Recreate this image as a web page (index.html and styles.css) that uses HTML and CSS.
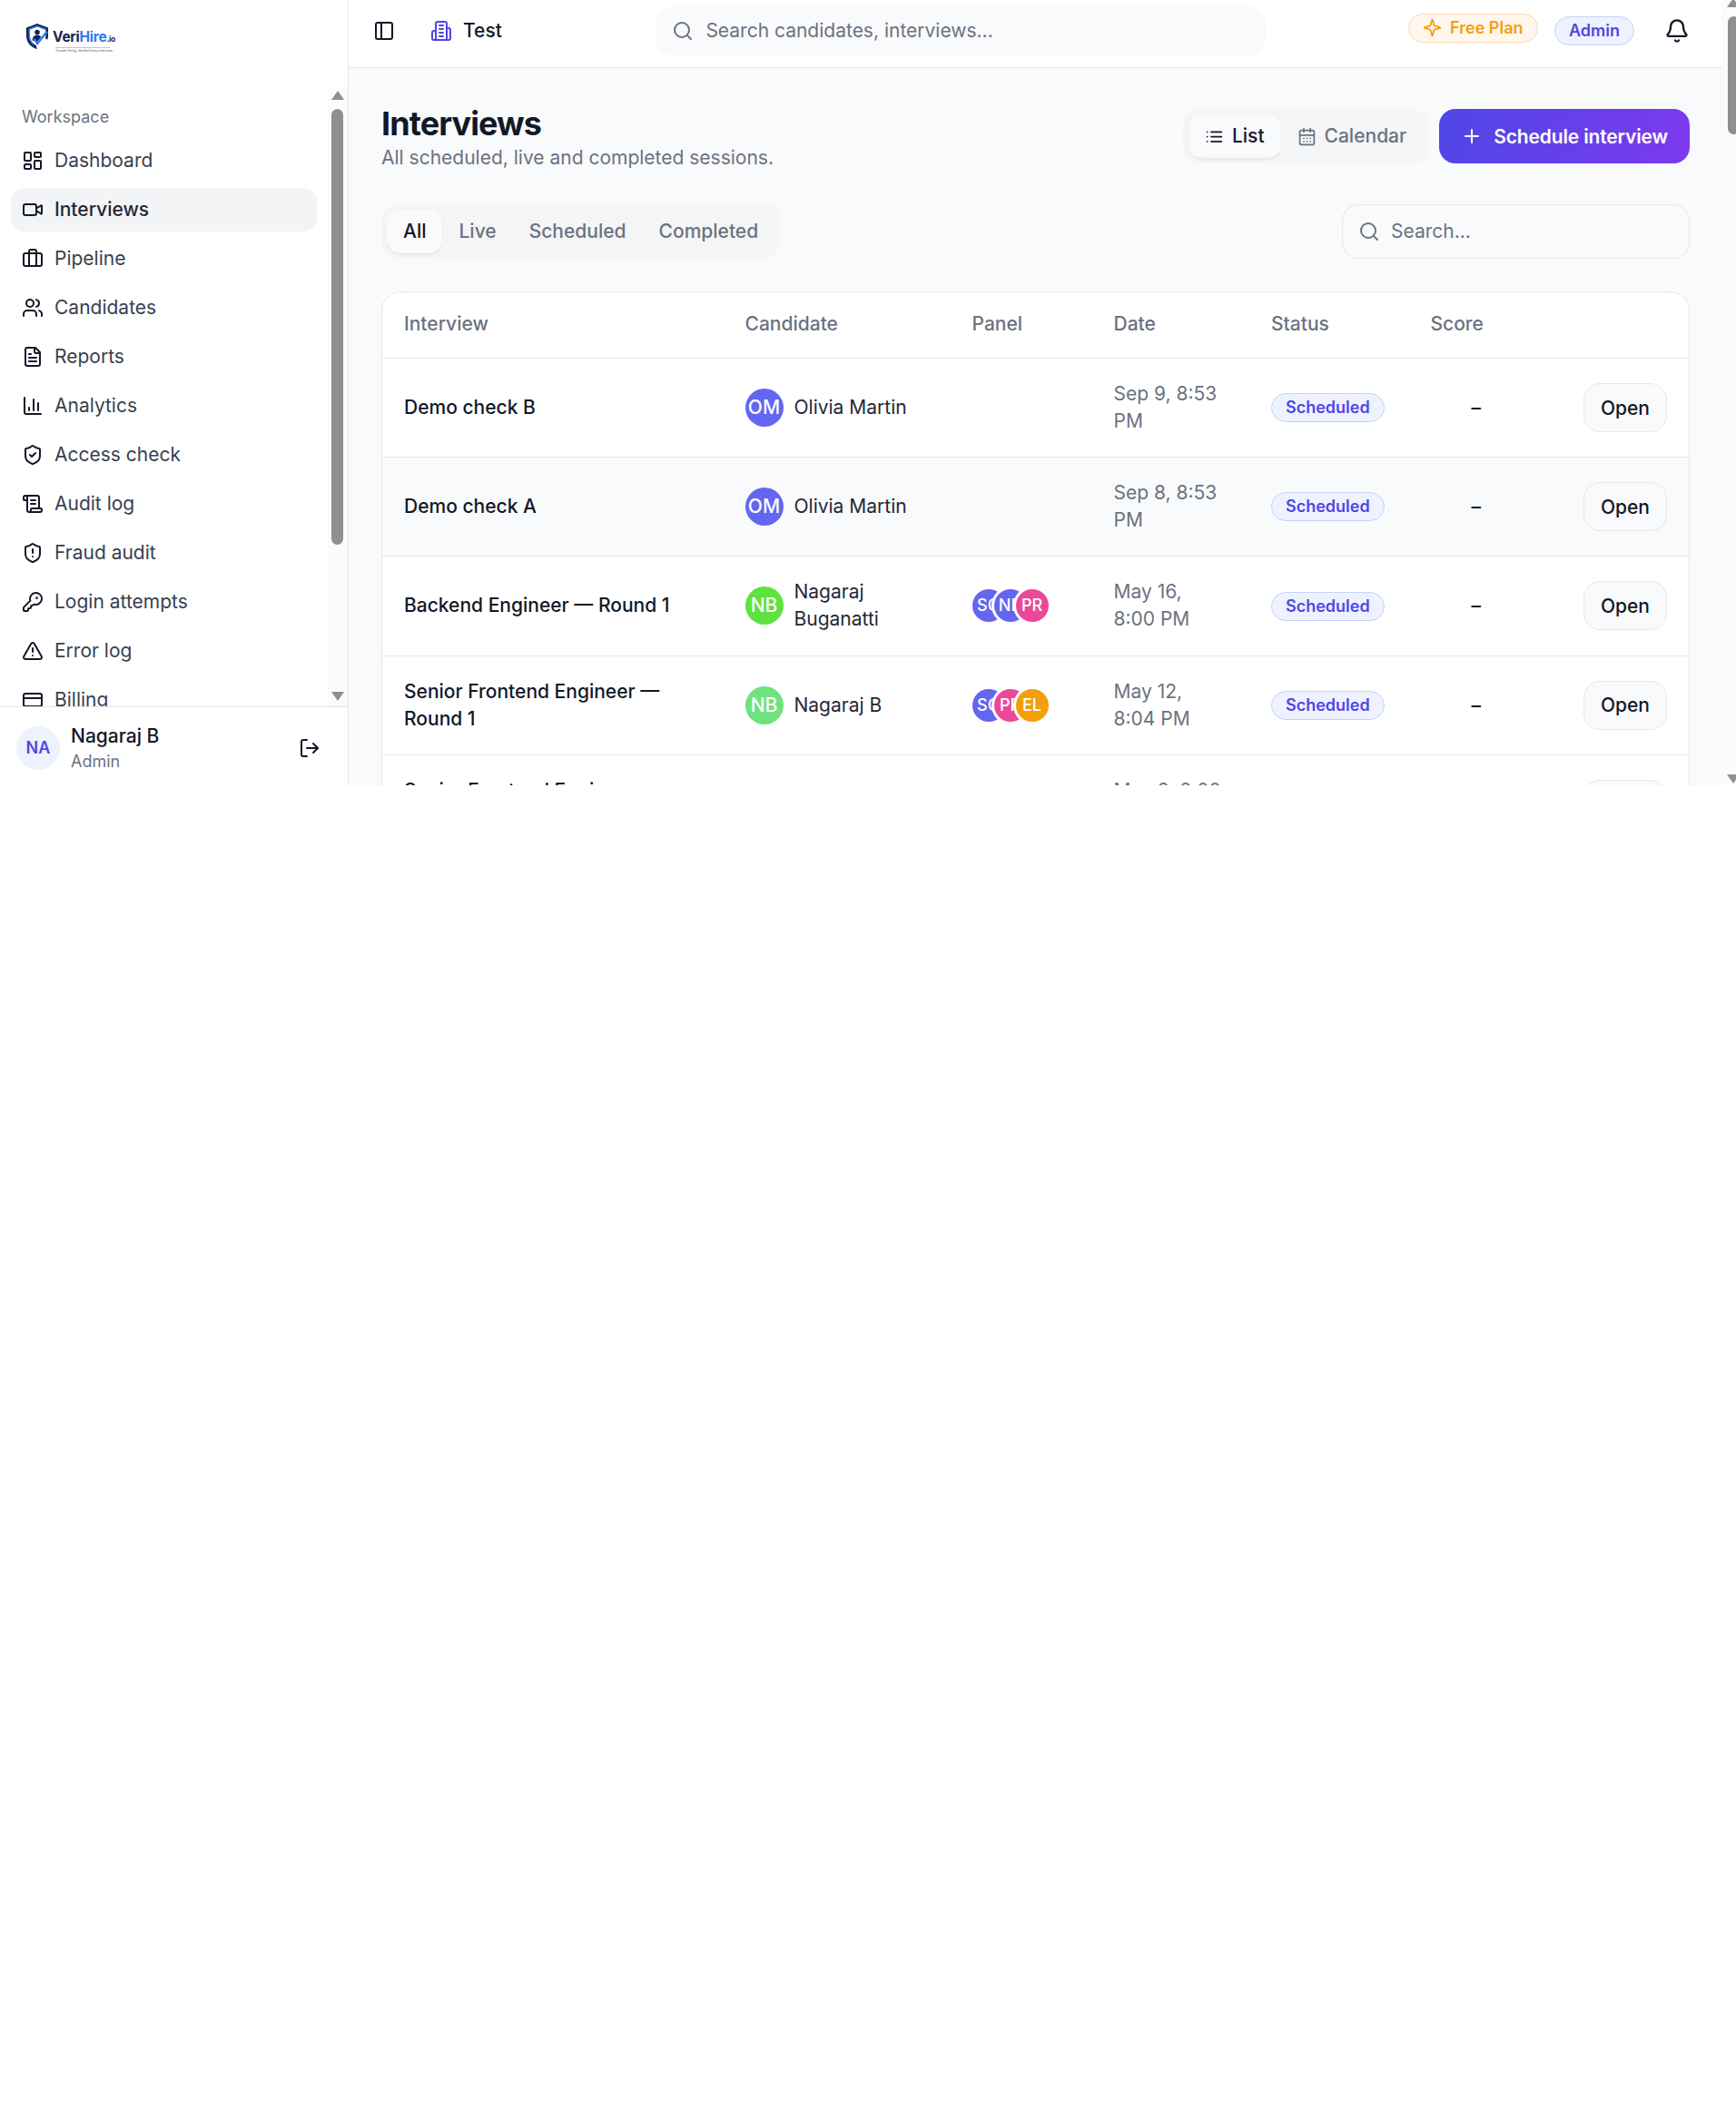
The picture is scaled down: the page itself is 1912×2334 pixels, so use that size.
FILE: index.html
```html
<!DOCTYPE html>
<html lang="en">
<head>
<meta charset="utf-8">
<title>Interviews</title>
<link rel="stylesheet" href="styles.css">
</head>
<body>
<svg class="sprite" aria-hidden="true">
  <symbol id="i-dash" viewBox="0 0 24 24"><rect x="3" y="3" width="7" height="9" rx="1"/><rect x="14" y="3" width="7" height="5" rx="1"/><rect x="14" y="12" width="7" height="9" rx="1"/><rect x="3" y="16" width="7" height="5" rx="1"/></symbol>
  <symbol id="i-video" viewBox="0 0 24 24"><path d="m16 13 5.223 3.482a.5.5 0 0 0 .777-.416V7.87a.5.5 0 0 0-.752-.432L16 10.5"/><rect x="2" y="6" width="14" height="12" rx="2"/></symbol>
  <symbol id="i-brief" viewBox="0 0 24 24"><path d="M16 20V4a2 2 0 0 0-2-2h-4a2 2 0 0 0-2 2v16"/><rect x="2" y="6" width="20" height="14" rx="2"/></symbol>
  <symbol id="i-users" viewBox="0 0 24 24"><path d="M16 21v-2a4 4 0 0 0-4-4H6a4 4 0 0 0-4 4v2"/><circle cx="9" cy="7" r="4"/><path d="M22 21v-2a4 4 0 0 0-3-3.87"/><path d="M16 3.13a4 4 0 0 1 0 7.75"/></symbol>
  <symbol id="i-file" viewBox="0 0 24 24"><path d="M15 2H6a2 2 0 0 0-2 2v16a2 2 0 0 0 2 2h12a2 2 0 0 0 2-2V7Z"/><path d="M14 2v4a2 2 0 0 0 2 2h4"/><path d="M10 9H8"/><path d="M16 13H8"/><path d="M16 17H8"/></symbol>
  <symbol id="i-chart" viewBox="0 0 24 24"><path d="M3 3v16a2 2 0 0 0 2 2h16"/><path d="M18 17V9"/><path d="M13 17V5"/><path d="M8 17v-3"/></symbol>
  <symbol id="i-shieldc" viewBox="0 0 24 24"><path d="M20 13c0 5-3.5 7.5-7.66 8.95a1 1 0 0 1-.67-.01C7.5 20.5 4 18 4 13V6a1 1 0 0 1 1-1c2 0 4.5-1.2 6.24-2.72a1.17 1.17 0 0 1 1.52 0C14.51 3.81 17 5 19 5a1 1 0 0 1 1 1z"/><path d="m9 12 2 2 4-4"/></symbol>
  <symbol id="i-scroll" viewBox="0 0 24 24"><path d="M15 12h-5"/><path d="M15 8h-5"/><path d="M19 17V5a2 2 0 0 0-2-2H4"/><path d="M8 21h12a2 2 0 0 0 2-2v-1a1 1 0 0 0-1-1H11a1 1 0 0 0-1 1v1a2 2 0 1 1-4 0V5a2 2 0 1 0-4 0v2a1 1 0 0 0 1 1h3"/></symbol>
  <symbol id="i-shielda" viewBox="0 0 24 24"><path d="M20 13c0 5-3.5 7.5-7.66 8.95a1 1 0 0 1-.67-.01C7.5 20.5 4 18 4 13V6a1 1 0 0 1 1-1c2 0 4.5-1.2 6.24-2.72a1.17 1.17 0 0 1 1.52 0C14.51 3.81 17 5 19 5a1 1 0 0 1 1 1z"/><path d="M12 8v4"/><path d="M12 16h.01"/></symbol>
  <symbol id="i-key" viewBox="0 0 24 24"><path d="M2.586 17.414A2 2 0 0 0 2 18.828V21a1 1 0 0 0 1 1h3a1 1 0 0 0 1-1v-1a1 1 0 0 1 1-1h1a1 1 0 0 0 1-1v-1a1 1 0 0 1 1-1h.172a2 2 0 0 0 1.414-.586l.814-.814a6.5 6.5 0 1 0-4-4z"/><circle cx="16.5" cy="7.5" r=".5"/></symbol>
  <symbol id="i-tri" viewBox="0 0 24 24"><path d="m21.73 18-8-14a2 2 0 0 0-3.48 0l-8 14A2 2 0 0 0 4 21h16a2 2 0 0 0 1.73-3"/><path d="M12 9v4"/><path d="M12 17h.01"/></symbol>
  <symbol id="i-card" viewBox="0 0 24 24"><rect x="2" y="5" width="20" height="14" rx="2"/><path d="M2 10h20"/></symbol>
  <symbol id="i-logout" viewBox="0 0 24 24"><path d="m16 17 5-5-5-5"/><path d="M21 12H9"/><path d="M9 21H5a2 2 0 0 1-2-2V5a2 2 0 0 1 2-2h4"/></symbol>
  <symbol id="i-panel" viewBox="0 0 24 24"><rect x="3" y="3" width="18" height="18" rx="2"/><path d="M9 3v18"/></symbol>
  <symbol id="i-building" viewBox="0 0 24 24"><path d="M6 22V4a2 2 0 0 1 2-2h8a2 2 0 0 1 2 2v18Z"/><path d="M6 12H4a2 2 0 0 0-2 2v6a2 2 0 0 0 2 2h2"/><path d="M18 9h2a2 2 0 0 1 2 2v9a2 2 0 0 1-2 2h-2"/><path d="M10 6h4"/><path d="M10 10h4"/><path d="M10 14h4"/><path d="M10 18h4"/></symbol>
  <symbol id="i-search" viewBox="0 0 24 24"><path d="m21 21-4.34-4.34"/><circle cx="11" cy="11" r="8"/></symbol>
  <symbol id="i-sparkle" viewBox="0 0 24 24"><path d="M9.937 15.5A2 2 0 0 0 8.5 14.063l-6.135-1.582a.5.5 0 0 1 0-.962L8.5 9.936A2 2 0 0 0 9.937 8.5l1.582-6.135a.5.5 0 0 1 .963 0L14.063 8.5A2 2 0 0 0 15.5 9.937l6.135 1.581a.5.5 0 0 1 0 .964L15.5 14.063a2 2 0 0 0-1.437 1.437l-1.582 6.135a.5.5 0 0 1-.963 0z"/></symbol>
  <symbol id="i-bell" viewBox="0 0 24 24"><path d="M10.268 21a2 2 0 0 0 3.464 0"/><path d="M3.262 15.326A1 1 0 0 0 4 17h16a1 1 0 0 0 .74-1.673C19.41 13.956 18 12.499 18 8A6 6 0 0 0 6 8c0 4.499-1.411 5.956-2.738 7.326"/></symbol>
  <symbol id="i-list" viewBox="0 0 24 24"><path d="M3 12h.01"/><path d="M3 18h.01"/><path d="M3 6h.01"/><path d="M8 12h13"/><path d="M8 18h13"/><path d="M8 6h13"/></symbol>
  <symbol id="i-cal" viewBox="0 0 24 24"><path d="M8 2v4"/><path d="M16 2v4"/><rect x="3" y="4" width="18" height="18" rx="2"/><path d="M3 10h18"/><path d="M8 14h.01"/><path d="M12 14h.01"/><path d="M16 14h.01"/><path d="M8 18h.01"/><path d="M12 18h.01"/><path d="M16 18h.01"/></symbol>
  <symbol id="i-plus" viewBox="0 0 24 24"><path d="M5 12h14"/><path d="M12 5v14"/></symbol>
</svg>

<div class="app">
  <aside class="sidebar">
    <div class="brand">
      <svg class="brand-mark" viewBox="0 0 24 28" aria-hidden="true">
        <path class="bm-navy" d="M12 0 24 4.500v9c0 1.600-.3 3-.9 4.300l-2.300-1.500c.3-.9.500-1.800.500-2.800V6.600L12 3.200 3.700 6.600v6.900c0 4.600 3 8.500 6.800 10.300L12 28C5 26.500 0 20.500 0 13.500v-9z"/>
        <path class="bm-blue" d="M12 2 22.600 6l-1.400.9L12 3.500 4 6.500v7c0 3.800 2 7 4.500 9l-.9 1C4.500 21 2.500 17.500 2.500 13.500V5.500z"/>
        <circle class="bm-navy-f" cx="12" cy="9.500" r="2.800"/>
        <path class="bm-navy-f" d="M6.600 18.500c0-3.700 2.300-6 5.400-6 1.800 0 3.200.7 4.300 2L12 20z"/>
        <path class="bm-blue" d="m7.500 17 4.500 7L24 9.200l-2.400-.9L12 20.300 9.300 15.800z"/>
      </svg>
      <div class="brand-text">
        <div class="brand-name"><span class="bn-navy">Veri</span><span class="bn-blue">Hire</span><span class="bn-io">.io</span></div>
        <div class="brand-rule"></div>
        <div class="brand-tag">Trusted Hiring. Verified Every Interview.</div>
      </div>
    </div>

    <nav class="nav">
      <div class="nav-label">Workspace</div>
      <a class="nav-item"><svg class="ic"><use href="#i-dash"/></svg>Dashboard</a>
      <a class="nav-item active"><svg class="ic"><use href="#i-video"/></svg>Interviews</a>
      <a class="nav-item"><svg class="ic"><use href="#i-brief"/></svg>Pipeline</a>
      <a class="nav-item"><svg class="ic"><use href="#i-users"/></svg>Candidates</a>
      <a class="nav-item"><svg class="ic"><use href="#i-file"/></svg>Reports</a>
      <a class="nav-item"><svg class="ic"><use href="#i-chart"/></svg>Analytics</a>
      <a class="nav-item"><svg class="ic"><use href="#i-shieldc"/></svg>Access check</a>
      <a class="nav-item"><svg class="ic"><use href="#i-scroll"/></svg>Audit log</a>
      <a class="nav-item"><svg class="ic"><use href="#i-shielda"/></svg>Fraud audit</a>
      <a class="nav-item"><svg class="ic"><use href="#i-key"/></svg>Login attempts</a>
      <a class="nav-item"><svg class="ic"><use href="#i-tri"/></svg>Error log</a>
      <a class="nav-item"><svg class="ic"><use href="#i-card"/></svg>Billing</a>
      <div class="sb sb-nav"><i class="sb-up"></i><i class="sb-thumb"></i><i class="sb-down"></i></div>
    </nav>

    <div class="user">
      <div class="user-av">NA</div>
      <div class="user-meta">
        <div class="user-name">Nagaraj B</div>
        <div class="user-role">Admin</div>
      </div>
      <svg class="ic user-out"><use href="#i-logout"/></svg>
    </div>
  </aside>

  <div class="main">
    <header class="topbar">
      <svg class="ic ic-dark"><use href="#i-panel"/></svg>
      <div class="org"><svg class="ic ic-indigo"><use href="#i-building"/></svg><span>Test</span></div>
      <div class="global-search"><svg class="ic ic-gray"><use href="#i-search"/></svg><span>Search candidates, interviews...</span></div>
      <div class="top-right">
        <span class="pill-free"><svg class="ic-21"><use href="#i-sparkle"/></svg>Free Plan</span>
        <span class="pill-admin">Admin</span>
        <svg class="ic-bell"><use href="#i-bell"/></svg>
      </div>
    </header>

    <main class="content">
      <div class="page-head">
        <div>
          <h1>Interviews</h1>
          <p>All scheduled, live and completed sessions.</p>
        </div>
        <div class="head-actions">
          <div class="view-switch">
            <span class="view-btn on"><svg class="ic-21"><use href="#i-list"/></svg>List</span>
            <span class="view-btn"><svg class="ic-21"><use href="#i-cal"/></svg>Calendar</span>
          </div>
          <button class="primary"><svg class="ic"><use href="#i-plus"/></svg>Schedule interview</button>
        </div>
      </div>

      <div class="toolbar">
        <div class="tabs">
          <span class="tab on">All</span>
          <span class="tab">Live</span>
          <span class="tab">Scheduled</span>
          <span class="tab">Completed</span>
        </div>
        <div class="filter-search"><svg class="ic ic-gray"><use href="#i-search"/></svg><span>Search...</span></div>
      </div>

      <section class="table">
        <div class="row head">
          <div class="cell">Interview</div><div class="cell">Candidate</div><div class="cell">Panel</div><div class="cell">Date</div><div class="cell">Status</div><div class="cell">Score</div><div class="cell"></div>
        </div>

        <div class="row">
          <div class="cell title">Demo check B</div>
          <div class="cell cand"><span class="av av-indigo">OM</span><span>Olivia Martin</span></div>
          <div class="cell"></div>
          <div class="cell date">Sep 9, 8:53 PM</div>
          <div class="cell"><span class="status">Scheduled</span></div>
          <div class="cell score">–</div>
          <div class="cell act"><button class="open">Open</button></div>
        </div>

        <div class="row alt">
          <div class="cell title">Demo check A</div>
          <div class="cell cand"><span class="av av-indigo">OM</span><span>Olivia Martin</span></div>
          <div class="cell"></div>
          <div class="cell date">Sep 8, 8:53 PM</div>
          <div class="cell"><span class="status">Scheduled</span></div>
          <div class="cell score">–</div>
          <div class="cell act"><button class="open">Open</button></div>
        </div>

        <div class="row">
          <div class="cell title">Backend Engineer — Round 1</div>
          <div class="cell cand"><span class="av av-green">NB</span><span>Nagaraj Buganatti</span></div>
          <div class="cell"><div class="stack"><span class="mini m-indigo">SC</span><span class="mini m-indigo">NB</span><span class="mini m-pink">PR</span></div></div>
          <div class="cell date">May 16, 8:00 PM</div>
          <div class="cell"><span class="status">Scheduled</span></div>
          <div class="cell score">–</div>
          <div class="cell act"><button class="open">Open</button></div>
        </div>

        <div class="row">
          <div class="cell title">Senior Frontend Engineer — Round 1</div>
          <div class="cell cand"><span class="av av-mint">NB</span><span>Nagaraj B</span></div>
          <div class="cell"><div class="stack"><span class="mini m-indigo">SC</span><span class="mini m-pink">PR</span><span class="mini m-amber">EL</span></div></div>
          <div class="cell date">May 12, 8:04 PM</div>
          <div class="cell"><span class="status">Scheduled</span></div>
          <div class="cell score">–</div>
          <div class="cell act"><button class="open">Open</button></div>
        </div>

        <div class="row">
          <div class="cell title">Senior Frontend Engineer — Round 1</div>
          <div class="cell cand"><span class="av av-teal">NB</span><span>Nagaraj B</span></div>
          <div class="cell"></div>
          <div class="cell date">May 8, 8:00 PM</div>
          <div class="cell"><span class="status">Scheduled</span></div>
          <div class="cell score">–</div>
          <div class="cell act"><button class="open">Open</button></div>
        </div>
      </section>
    </main>
  </div>

  <div class="sb sb-page"><i class="sb-up"></i><i class="sb-thumb"></i><i class="sb-down"></i></div>
</div>
</body>
</html>
```

FILE: styles.css
```css
* { box-sizing: border-box; }
html, body { margin: 0; padding: 0; background: #fff; }
body { font-family: Inter, "Noto Sans", sans-serif; font-size: 21px; line-height: 30px; color: #111827; overflow: hidden; }
.sprite { position: absolute; width: 0; height: 0; }
svg use { fill: none; stroke: currentColor; stroke-width: 2; stroke-linecap: round; stroke-linejoin: round; }
.ic { width: 24px; height: 24px; flex: none; fill: none; stroke: currentColor; stroke-width: 2; stroke-linecap: round; stroke-linejoin: round; }
.ic-21 { width: 21px; height: 21px; flex: none; }
.ic-bell { width: 28px; height: 28px; flex: none; color: #111827; margin-left: 33px; }
.ic-dark { color: #111827; }
.ic-indigo { color: #4f46e5; }
.ic-gray { color: #6b7280; }

.app { position: relative; display: flex; width: 1912px; height: 865px; overflow: hidden; padding-right: 15px; background: #f9fafb; }

/* sidebar */
.sidebar { width: 384px; flex: none; display: flex; flex-direction: column; background: #fff; border-right: 1.5px solid #e5e7eb; }
.brand { height: 97px; flex: none; display: flex; align-items: flex-start; padding: 26px 0 0 29px; gap: 5px; }
.brand-mark { width: 24px; height: 28px; flex: none; }
.bm-navy { fill: #14264f; }
.bm-navy-f { fill: #14264f; }
.bm-blue { fill: #2f7bf2; }
.brand-text { padding-top: 6px; }
.brand-name { font-size: 15.5px; line-height: 17px; font-weight: 700; letter-spacing: -.25px; white-space: nowrap; }
.bn-navy { color: #14264f; }
.bn-blue { color: #2f7bf2; }
.bn-io { color: #14264f; font-size: 8.5px; }
.brand-rule { height: 1px; width: 60px; margin: 0 0 1px 3px; background: #b9c6e6; }
.brand-tag { font-size: 3.4px; line-height: 5px; margin-left: 3px; color: #475569; white-space: nowrap; }

.nav { position: relative; flex: 1; min-height: 0; overflow: hidden; padding: 17.500px 34.500px 0 12px; }
.nav-label { font-size: 18px; line-height: 27px; padding-left: 12px; margin-bottom: 11px; color: #6b7280; }
.nav-item { display: flex; align-items: center; gap: 12px; height: 48px; margin-bottom: 6px; padding-left: 12px; border-radius: 15px; color: #374151; }
.nav-item .ic { color: #111827; }
.nav-item.active { background: #f3f4f6; color: #1f2937; font-weight: 500; }

.user { height: 87px; flex: none; display: flex; align-items: center; gap: 12px; padding: 3px 30px 0 18px; border-top: 1.5px solid #e5e7eb; }
.user-av { width: 48px; height: 48px; flex: none; border-radius: 50%; background: #eef2ff; color: #4f46e5; font-size: 18px; font-weight: 600; display: flex; align-items: center; justify-content: center; }
.user-meta { flex: 1; min-width: 0; }
.user-name { font-weight: 500; line-height: 30px; color: #111827; }
.user-role { font-size: 18px; line-height: 26px; color: #6b7280; }
.user-out { color: #111827; }

/* scrollbars */
.sb { position: absolute; top: 0; bottom: 0; width: 22px; background: #fbfbfb; }
.sb i { position: absolute; display: block; }
.sb-thumb { left: 4px; width: 13px; background: #8f8f8f; border-radius: 7px; }
.sb-up, .sb-down { left: 3.500px; width: 0; height: 0; border-left: 7.500px solid transparent; border-right: 7.500px solid transparent; }
.sb-up { border-bottom: 10px solid #8f8f8f; }
.sb-down { border-top: 10px solid #8f8f8f; }
.sb-nav { right: 0; }
.sb-nav .sb-up { top: 3px; }
.sb-nav .sb-thumb { top: 23px; height: 480px; }
.sb-nav .sb-down { bottom: 6px; }
.sb-page { left: 1897px; }
.sb-page .sb-up { top: -2px; left: 5px; }
.sb-page .sb-thumb { top: 18px; height: 130px; left: 5.500px; }
.sb-page .sb-down { bottom: 2px; left: 5px; }

/* main */
.main { flex: 1; min-width: 0; display: flex; flex-direction: column; }
.topbar { height: 74.500px; flex: none; display: flex; align-items: center; padding: 0 36px 6px 27px; background: #fff; border-bottom: 1.5px solid #e5e7eb; }
.org { display: flex; align-items: center; gap: 12px; margin-left: 39px; font-weight: 500; color: #111827; }
.global-search { width: 672px; height: 54px; margin-left: 169px; display: flex; align-items: center; gap: 13.500px; padding-left: 18px; border-radius: 18px; background: #f9fafb; color: #6b7280; }
.top-right { margin-left: auto; display: flex; align-items: center; }
.pill-free { display: flex; align-items: center; gap: 9px; height: 32px; margin: -6px 18.500px 0 0; padding: 0 15px; border-radius: 16px; background: #fff7ed; border: 1.5px solid #fed7aa; color: #f59e0b; font-size: 18px; font-weight: 600; }
.pill-admin { display: flex; align-items: center; height: 32px; padding: 0 15px; border-radius: 16px; background: #eef2ff; border: 1.5px solid #c7d2fe; color: #4f46e5; font-size: 18px; font-weight: 600; }

.content { padding: 37.500px 0 0 36px; margin-right: 36px; }
.page-head { display: flex; align-items: center; justify-content: space-between; margin-bottom: 36.500px; }
h1 { margin: 1.500px 0 0; font-size: 36px; line-height: 45px; font-weight: 700; letter-spacing: -.9px; color: #111827; }
.page-head p { margin: 0; color: #6b7280; }
.head-actions { display: flex; align-items: center; gap: 12px; }
.view-switch { display: flex; align-items: center; height: 60px; padding: 0 6px; border-radius: 18px; background: #f4f5f7; }
.view-btn { display: flex; align-items: center; gap: 9px; height: 48px; padding: 0 18px; border-radius: 15px; font-weight: 500; color: #6b7280; }
.view-btn.on { background: #f9fafb; color: #111827; box-shadow: 0 1.500px 3px rgba(0,0,0,.06); }
.primary { display: flex; align-items: center; gap: 12px; height: 60px; padding: 0 24px; border: 0; border-radius: 18px; background: linear-gradient(100deg, #4f46e5, #7c3aed); color: #fff; font: 600 21px Inter, sans-serif; letter-spacing: -.15px; }

.toolbar { display: flex; align-items: center; justify-content: space-between; margin-bottom: 36px; }
.tabs { display: flex; align-items: center; height: 60px; padding: 0 6px; border-radius: 18px; background: #f4f5f7; }
.tab { height: 48px; display: flex; align-items: center; padding: 0 18px; border-radius: 15px; font-weight: 500; color: #6b7280; }
.tab.on { background: #f9fafb; color: #111827; box-shadow: 0 1.500px 3px rgba(0,0,0,.06); }
.filter-search { width: 383px; height: 60px; display: flex; align-items: center; gap: 12px; padding-left: 17px; border: 1.5px solid #e5e7eb; border-radius: 18px; background: #f9fafb; color: #6b7280; }

/* table */
.table { border: 1.5px solid #e5e7eb; border-radius: 21px; background: #fff; overflow: hidden; }
.row { display: grid; grid-template-columns: 375.500px 250px 156px 173.500px 175.500px 1fr 120px; height: 109.200px; border-bottom: 1.5px solid #e5e7eb; align-items: center; }
.row.head { height: 73px; padding-bottom: 2.500px; color: #6b7280; font-weight: 500; }
.row.alt { background: #f9fafb; }
.cell { padding: 0 24px; min-width: 0; }
.title { font-weight: 500; color: #111827; }
.cand { display: flex; align-items: center; gap: 12px; color: #1f2937; }
.av { width: 42px; height: 42px; flex: none; border-radius: 50%; display: flex; align-items: center; justify-content: center; color: #fff; font-weight: 500; overflow: hidden; white-space: nowrap; }
.av-indigo { background: #6366f1; }
.av-green { background: #5ee23f; }
.av-mint { background: #6ee27d; }
.av-teal { background: #6ee7b7; }
.stack { display: flex; }
.mini { width: 36px; height: 36px; flex: none; margin-right: -12px; border-radius: 50%; box-shadow: 0 0 0 3px #fff; display: flex; align-items: center; justify-content: center; color: #fff; font-size: 18px; font-weight: 500; overflow: hidden; white-space: nowrap; }
.m-indigo { background: #6366f1; }
.m-pink { background: #ec4899; }
.m-amber { background: #f59e0b; }
.date { color: #6b7280; }
.status { display: inline-flex; align-items: center; height: 32px; padding: 0 15px; border-radius: 16px; background: #eef2ff; border: 1.5px solid #c7d2fe; color: #4f46e5; font-size: 18px; font-weight: 600; vertical-align: middle; }
.score { padding-left: 69px; font-weight: 500; color: #111827; }
.act { display: flex; justify-content: flex-end; }
.open { height: 54px; padding: 0 18px; border: 1.5px solid #e5e7eb; border-radius: 18px; background: #f9fafb; color: #111827; font: 500 21px Inter, sans-serif; }
```
